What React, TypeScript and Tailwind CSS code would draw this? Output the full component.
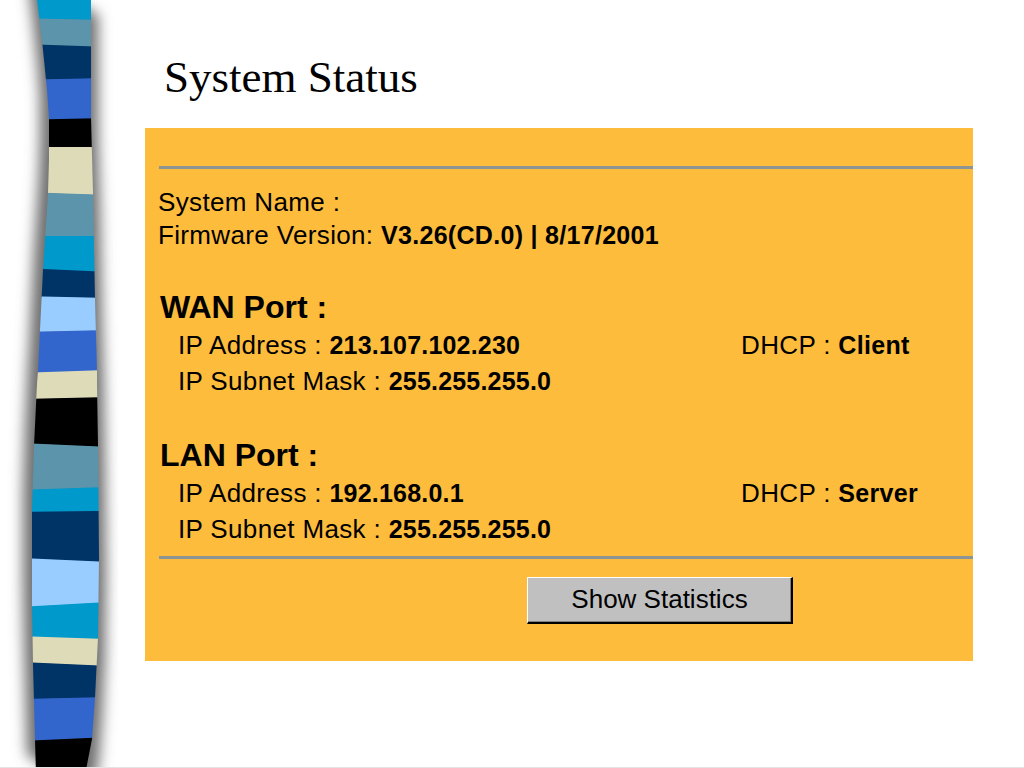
import React from "react";

const C = {
  cyan: "#0099cc",
  steel: "#5b94ab",
  navy: "#003366",
  blue: "#3366cc",
  black: "#000000",
  beige: "#dedcb8",
  light: "#99ccff",
};

const bounds: [number, number][] = [
  [0, 0],
  [18, 20],
  [44, 47],
  [80, 78],
  [120, 118],
  [147, 147],
  [192, 195],
  [236, 236],
  [268, 272],
  [296, 298],
  [332, 330],
  [373, 370],
  [399, 397],
  [443, 447],
  [490, 487],
  [512, 511],
  [558, 562],
  [607, 602],
  [636, 639],
  [662, 666],
  [699, 697],
  [741, 737],
  [780, 780],
];

const colors = [
  C.cyan, C.steel, C.navy, C.blue, C.black, C.beige, C.steel, C.cyan, C.navy, C.light, C.blue,
  C.beige, C.black, C.steel, C.cyan, C.navy, C.light, C.cyan, C.beige, C.navy, C.blue, C.black,
];

const leftEdge: [number, number][] = [
  [37, -5], [37, 0], [42, 40], [47, 90], [49, 118], [49, 160], [48, 193], [45, 240], [43, 270],
  [40, 330], [38, 371], [37, 384], [34, 446], [32, 511], [32, 604], [33, 664], [35, 739], [36, 775],
];
const rightEdge: [number, number][] = [
  [91, -5], [91, 0], [91, 118], [93, 193], [95, 300], [97, 371], [97, 384], [98, 446], [99, 558],
  [98, 637], [95, 698], [92, 739], [85, 775],
];

const outline =
  "M" +
  leftEdge.map(([x, y]) => `${x},${y}`).join(" L") +
  " L" +
  [...rightEdge].reverse().map(([x, y]) => `${x},${y}`).join(" L") +
  " Z";

const shadowOutline =
  "M" +
  leftEdge.map(([x, y]) => `${x - 9},${y - 20}`).join(" L") +
  " L" +
  [...rightEdge].reverse().map(([x, y]) => `${x + 7},${y + 20}`).join(" L") +
  " Z";

function Strip() {
  return (
    <svg width="118" height="767" viewBox="0 0 118 767" className="block">
      <defs>
        <filter id="blur" x="-50%" y="-10%" width="200%" height="120%">
          <feGaussianBlur stdDeviation="7" />
        </filter>
        <clipPath id="clip">
          <path d={outline} />
        </clipPath>
      </defs>
      <path d={shadowOutline} fill="#6e6e6e" filter="url(#blur)" />
      <g clipPath="url(#clip)">
        {colors.map((c, i) => {
          const [t1, t2] = bounds[i];
          const [b1, b2] = bounds[i + 1];
          return (
            <polygon
              key={i}
              points={`20,${t1 - (i === 0 ? 10 : 0)} 110,${t2 - (i === 0 ? 10 : 0)} 110,${b2 + 0.5} 20,${b1 + 0.5}`}
              fill={c}
            />
          );
        })}
      </g>
    </svg>
  );
}

export default function App() {
  return (
    <div className="w-[1024px] h-[768px] bg-white overflow-hidden flex flex-col">
      <div className="flex h-[767px]">
        <Strip />
        <div className="ml-[27px] pt-[51px] flex flex-col">
          <div className="pl-[19px] font-['Liberation_Serif',serif] text-[45px] leading-[52px] text-black">
            System Status
          </div>
          <div className="mt-[25px] w-[828px] h-[533px] bg-[#fdbc3b] pt-[38px] font-['Liberation_Sans',Arial,sans-serif] text-black tracking-[0.35px]">
            <div className="ml-[14px] h-[3px] bg-[#8c9494]" />
            <div className="mt-[17px] pl-[13px] text-[26px] leading-[33px]">System Name :</div>
            <div className="pl-[13px] text-[26px] leading-[33px]">
              Firmware Version: <span className="font-bold text-[25px] tracking-[0.3px]">V3.26(CD.0) | 8/17/2001</span>
            </div>
            <div className="mt-[35px] pl-[15px] text-[32px] font-bold leading-[40px] tracking-[0px]">WAN Port :</div>
            <div className="flex pl-[33px] text-[26px] leading-[36px]">
              <div className="w-[563px]">
                IP Address : <span className="font-bold text-[25px] tracking-[0.2px]">213.107.102.230</span>
              </div>
              <div>
                DHCP : <span className="font-bold text-[25px] tracking-[0.3px]">Client</span>
              </div>
            </div>
            <div className="pl-[33px] text-[26px] leading-[36px]">
              IP Subnet Mask : <span className="font-bold text-[25px] tracking-[0.2px]">255.255.255.0</span>
            </div>
            <div className="mt-[36px] pl-[15px] text-[32px] font-bold leading-[40px] tracking-[0px]">LAN Port :</div>
            <div className="flex pl-[33px] text-[26px] leading-[36px]">
              <div className="w-[563px]">
                IP Address : <span className="font-bold text-[25px] tracking-[0.2px]">192.168.0.1</span>
              </div>
              <div>
                DHCP : <span className="font-bold text-[25px] tracking-[0.3px]">Server</span>
              </div>
            </div>
            <div className="pl-[33px] text-[26px] leading-[36px]">
              IP Subnet Mask : <span className="font-bold text-[25px] tracking-[0.2px]">255.255.255.0</span>
            </div>
            <div className="mt-[9px] ml-[14px] h-[3px] bg-[#8c9494]" />
            <div className="mt-[18px] ml-[382px] flex">
              <button className="w-[266px] h-[47px] bg-[#c0c0c0] border-t border-l border-white border-b-2 border-r-2 border-b-black border-r-black shadow-[inset_-1px_-1px_0_#808080] text-[26px] leading-[30px] pb-[3px] text-black tracking-[0px] font-['Liberation_Sans',Arial,sans-serif]">
                Show Statistics
              </button>
            </div>
          </div>
        </div>
      </div>
      <div className="h-[1px] bg-[#e4e4e4]" />
    </div>
  );
}
